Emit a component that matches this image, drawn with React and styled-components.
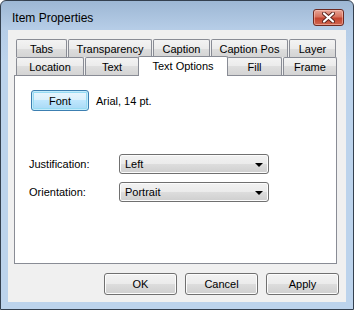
import styled, { createGlobalStyle } from "styled-components"

const GlobalStyle = createGlobalStyle`
body {
  margin: 0;
  font-family: "Liberation Sans", Arial, sans-serif;
  font-size: 11px;
  color: #000;
}
`

const Window = styled.div`
width: 354px;
height: 310px;
box-sizing: border-box;
border: 1px solid #34404f;
border-radius: 6px 6px 0 0;
background: linear-gradient(180deg, #9db7d4 0px, #b6cde7 28px, #bcd3ec 60px, #bcd3ec 100%);
padding: 0 7px 7px 7px;
display: flex;
flex-direction: column;
`

const TitleBar = styled.div`
height: 29px;
box-sizing: border-box;
padding: 4px 2px 0 4px;
display: flex;
align-items: center;
justify-content: space-between;
`

const Title = styled.span`
font-size: 12px;
color: #000;
`

const CloseButton = styled.div`
width: 31px;
height: 17px;
box-sizing: border-box;
border: 1px solid #6d2a22;
border-radius: 3px;
background: linear-gradient(180deg, #e8a597 0%, #d7735f 45%, #c4442f 55%, #cf6650 100%);
box-shadow: inset 0 0 0 1px rgba(255, 210, 200, 0.5);
display: flex;
align-items: center;
justify-content: center;
`

const Client = styled.div`
flex: 1;
background: #f0f0f0;
padding: 9px 7px 7px 6px;
display: flex;
flex-direction: column;
`

const TabStrip = styled.div`
width: 323px;
display: flex;
flex-direction: column;
`

const TabRow = styled.div`
height: 18px;
display: flex;
align-items: flex-end;
gap: 1px;
padding-left: 2px;
`

const Tab = styled.div`
width: ${p => p.$w}px;
height: 18px;
box-sizing: border-box;
border: 1px solid #898c95;
border-bottom: none;
border-radius: 2px 2px 0 0;
background: linear-gradient(180deg, #f3f3f3 0%, #ebebeb 50%, #dedede 50%, #d4d4d4 100%);
display: flex;
align-items: center;
justify-content: center;
padding-top: 1px;
`

const ActiveTab = styled.div`
width: ${p => p.$w + 4}px;
height: 20px;
margin: 0 -2px -1px -2px;
box-sizing: border-box;
border: 1px solid #898c95;
border-bottom: none;
border-radius: 2px 2px 0 0;
background: #fff;
position: relative;
z-index: 1;
display: flex;
justify-content: center;
padding-top: 3px;
`

const Panel = styled.div`
width: 323px;
height: 189px;
box-sizing: border-box;
border: 1px solid #898c95;
background: #fff;
padding: 14px 14px 0 14px;
display: flex;
flex-direction: column;
`

const FontRow = styled.div`
display: flex;
align-items: center;
gap: 7px;
margin-left: 2px;
`

const Button = styled.div`
width: ${p => p.$w || 73}px;
height: ${p => p.$h || 22}px;
box-sizing: border-box;
border: 1px solid #707070;
border-radius: 3px;
background: linear-gradient(180deg, #f2f2f2 0%, #ebebeb 50%, #dddddd 50%, #cfcfcf 100%);
box-shadow: inset 0 0 0 1px #fcfcfc;
display: flex;
align-items: center;
justify-content: center;
`

const DefaultButton = styled(Button)`
border-color: #3c7fb1;
background: linear-gradient(180deg, #eaf6fd 0%, #d9f0fc 50%, #bee6fd 50%, #a7d9f5 100%);
box-shadow: inset 0 0 0 1px #c4ecfb, inset 0 0 0 2px #97dbf3;
`

const Fields = styled.div`
margin-top: 43px;
display: flex;
flex-direction: column;
gap: 8px;
`

const FieldRow = styled.div`
display: flex;
align-items: center;
height: 20px;
`

const Label = styled.span`
width: 90px;
`

const Combo = styled.div`
width: 150px;
height: 20px;
box-sizing: border-box;
border: 1px solid #707070;
border-radius: 3px;
background: linear-gradient(180deg, #f2f2f2 0%, #ebebeb 50%, #dddddd 50%, #cfcfcf 100%);
box-shadow: inset 0 0 0 1px #fcfcfc;
display: flex;
align-items: center;
justify-content: space-between;
padding: 0 5px 0 5px;
`

const Arrow = styled.span`
width: 0;
height: 0;
border-left: 4px solid transparent;
border-right: 4px solid transparent;
border-top: 4px solid #000;
margin-top: 1px;
`

const ButtonBar = styled.div`
margin-top: 9px;
display: flex;
justify-content: flex-end;
gap: 8px;
`

const upperTabs = [
  { label: "Tabs", w: 51 },
  { label: "Transparency", w: 84 },
  { label: "Caption", w: 57 },
  { label: "Caption Pos", w: 77 },
  { label: "Layer", w: 47 },
]

const lowerTabs = [
  { label: "Location", w: 68 },
  { label: "Text", w: 54 },
  { label: "Text Options", w: 86, active: true },
  { label: "Fill", w: 55 },
  { label: "Frame", w: 54 },
]

function CloseIcon() {
  return (
    <svg width="13" height="11" viewBox="0 0 13 11">
      <path d="M2 1.5 L11 9.5 M11 1.5 L2 9.5" stroke="#5a231c" strokeWidth="4" strokeLinecap="round" />
      <path d="M2 1.5 L11 9.5 M11 1.5 L2 9.5" stroke="#fff" strokeWidth="2.2" strokeLinecap="round" />
    </svg>
  )
}

export default function App() {
  return <>
    <GlobalStyle />
    <Window>
      <TitleBar>
        <Title>Item Properties</Title>
        <CloseButton><CloseIcon /></CloseButton>
      </TitleBar>
      <Client>
        <TabStrip>
          <TabRow>
            {upperTabs.map(t => <Tab key={t.label} $w={t.w}>{t.label}</Tab>)}
          </TabRow>
          <TabRow>
            {lowerTabs.map(t => t.active
              ? <ActiveTab key={t.label} $w={t.w}>{t.label}</ActiveTab>
              : <Tab key={t.label} $w={t.w}>{t.label}</Tab>)}
          </TabRow>
        </TabStrip>
        <Panel>
          <FontRow>
            <DefaultButton $w={58} $h={21}>Font</DefaultButton>
            <span>Arial, 14 pt.</span>
          </FontRow>
          <Fields>
            <FieldRow>
              <Label>Justification:</Label>
              <Combo><span>Left</span><Arrow /></Combo>
            </FieldRow>
            <FieldRow>
              <Label>Orientation:</Label>
              <Combo><span>Portrait</span><Arrow /></Combo>
            </FieldRow>
          </Fields>
        </Panel>
        <ButtonBar>
          <Button>OK</Button>
          <Button>Cancel</Button>
          <Button>Apply</Button>
        </ButtonBar>
      </Client>
    </Window>
  </>
}
